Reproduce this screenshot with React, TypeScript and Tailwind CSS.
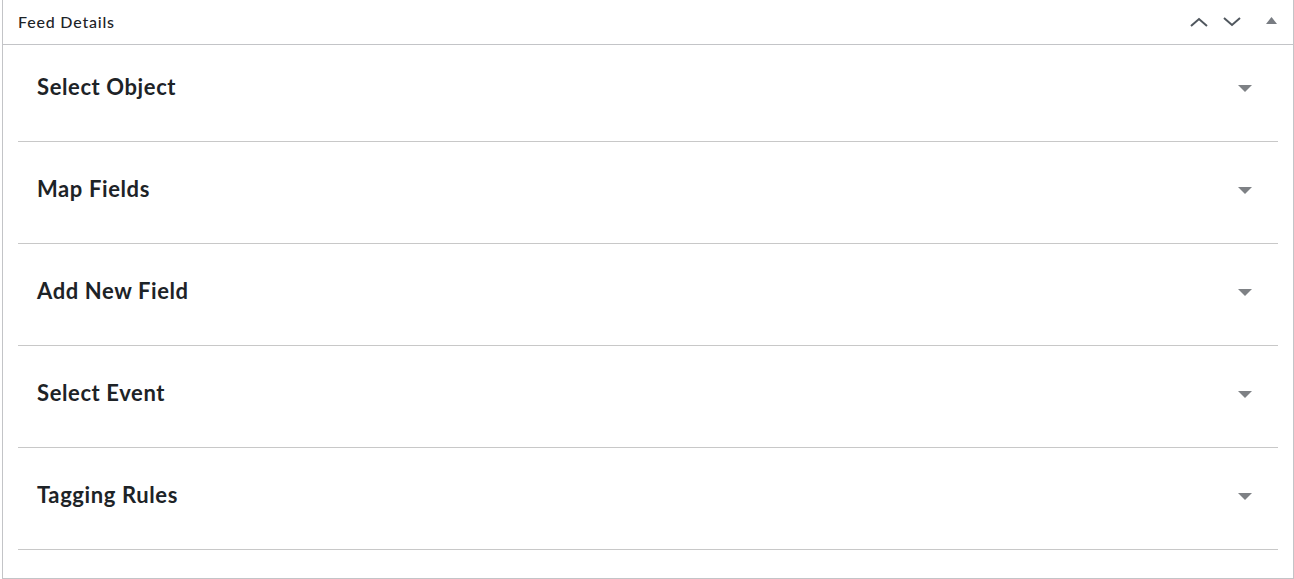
import React from "react";

const rows = ["Select Object", "Map Fields", "Add New Field", "Select Event", "Tagging Rules"];

function Caret() {
  return (
    <svg width="14" height="8" viewBox="0 0 14 8" className="block mt-[5px]">
      <polygon points="0,0 14,0 7,7" fill="#7e8185" />
    </svg>
  );
}

export default function App() {
  return (
    <div className="w-[1294px] h-[579px] bg-white" style={{ fontFamily: "Lato, 'Open Sans', sans-serif" }}>
      <div className="ml-[2px] h-[579px] border-l border-r border-b border-[#c3c4c7] bg-white box-border">
        <div className="h-[45px] border-b border-[#c3c4c7] flex items-center justify-between box-border pl-[15px] pr-[16px]">
          <span className="text-[16px] font-medium text-[#1d2327] tracking-[0.8px] pb-[1px]">Feed Details</span>
          <div className="flex items-center">
            <svg width="18" height="12" viewBox="0 0 18 12" className="block mr-[15px]">
              <polyline points="1,10 9,3 17,10" fill="none" stroke="#50575e" strokeWidth="2" />
            </svg>
            <svg width="18" height="12" viewBox="0 0 18 12" className="block mr-[25px]">
              <polyline points="1,2 9,9 17,2" fill="none" stroke="#50575e" strokeWidth="2" />
            </svg>
            <svg width="11" height="8" viewBox="0 0 11 8" className="block mb-[3px]">
              <polygon points="0,7 11,7 5.5,0" fill="#787c82" />
            </svg>
          </div>
        </div>
        <div className="pl-[15px] pr-[15px] -mt-[5px]">
          {rows.map((r) => (
            <div key={r} className="h-[102px] box-border border-b border-[#c8c8c8] flex items-center justify-between pl-[19px] pr-[26px] pb-[8px]">
              <span className="text-[22px] font-bold text-[#1d2327] tracking-[0.6px]">{r}</span>
              <Caret />
            </div>
          ))}
        </div>
      </div>
    </div>
  );
}
